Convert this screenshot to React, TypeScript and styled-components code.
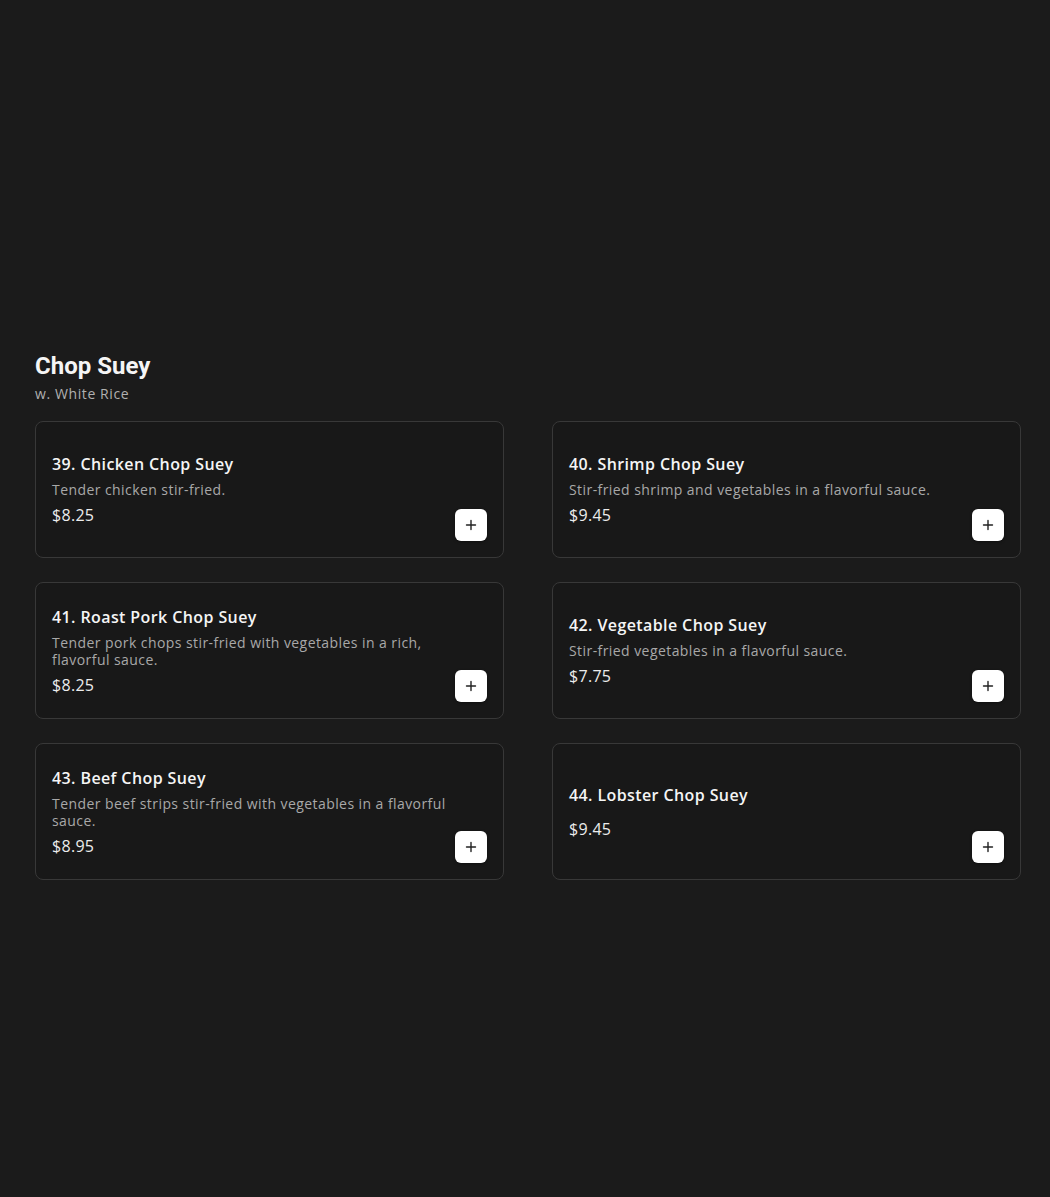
import { FC } from "react"
import styled, { createGlobalStyle } from "styled-components"

const GlobalStyle = createGlobalStyle`
  html, body {
    margin: 0;
    padding: 0;
    background: #1b1b1b;
  }
  body {
    font-family: "Open Sans", "Liberation Sans", sans-serif;
    color: #f2f2f2;
  }
`

const Page = styled.div`
  min-height: 1197px;
  padding: 352px 30px 0 35px;
  box-sizing: border-box;
`

const Heading = styled.h2`
  margin: 0;
  font-family: Roboto, "Liberation Sans", sans-serif;
  font-size: 24px;
  font-weight: 700;
  line-height: 28px;
  color: #f5f5f5;
`

const Subtitle = styled.p`
  margin: 4px 0 0;
  font-size: 14px;
  line-height: 20px;
  letter-spacing: 0.6px;
  color: #b0b0b0;
`

const Grid = styled.div`
  display: grid;
  grid-template-columns: 469px 469px;
  column-gap: 48px;
  row-gap: 24px;
  margin-top: 17px;
`

const Card = styled.div`
  display: flex;
  justify-content: space-between;
  height: 137px;
  box-sizing: border-box;
  padding: 16px;
  background: #181818;
  border: 1px solid #383838;
  border-radius: 8px;
`

const Info = styled.div`
  align-self: center;
  display: flex;
  flex-direction: column;
  max-width: 400px;
`

const Title = styled.div`
  font-size: 16px;
  font-weight: 600;
  line-height: 24px;
  letter-spacing: 0.4px;
  color: #f5f5f5;
`

const Desc = styled.div`
  margin: 5px 0;
  font-size: 14px;
  line-height: 17px;
  letter-spacing: 0.43px;
  color: #a8a8a8;
`

const Price = styled.div`
  font-size: 16px;
  line-height: 24px;
  letter-spacing: 0.3px;
  color: #ececec;
`

const AddButton = styled.button`
  align-self: flex-end;
  flex: none;
  width: 32px;
  height: 32px;
  padding: 0;
  display: flex;
  align-items: center;
  justify-content: center;
  background: #ffffff;
  border: none;
  border-radius: 6px;
  cursor: pointer;
  box-shadow: 0 1px 3px rgba(0, 0, 0, 0.4);
`

type Item = { name: string; desc?: string; price: string }

const items: Item[] = [
  { name: "39. Chicken Chop Suey", desc: "Tender chicken stir-fried.", price: "$8.25" },
  { name: "40. Shrimp Chop Suey", desc: "Stir-fried shrimp and vegetables in a flavorful sauce.", price: "$9.45" },
  {
    name: "41. Roast Pork Chop Suey",
    desc: "Tender pork chops stir-fried with vegetables in a rich, flavorful sauce.",
    price: "$8.25",
  },
  { name: "42. Vegetable Chop Suey", desc: "Stir-fried vegetables in a flavorful sauce.", price: "$7.75" },
  {
    name: "43. Beef Chop Suey",
    desc: "Tender beef strips stir-fried with vegetables in a flavorful sauce.",
    price: "$8.95",
  },
  { name: "44. Lobster Chop Suey", price: "$9.45" },
]

const PlusIcon: FC = () => (
  <svg width="12" height="12" viewBox="0 0 12 12" fill="none">
    <path d="M6 1.5v9M1.5 6h9" stroke="#222" strokeWidth="1.4" strokeLinecap="round" />
  </svg>
)

const App: FC = () => (
  <>
    <GlobalStyle />
    <Page>
      <Heading>Chop Suey</Heading>
      <Subtitle>w. White Rice</Subtitle>
      <Grid>
        {items.map((item) => (
          <Card key={item.name}>
            <Info>
              <Title>{item.name}</Title>
              <Desc>{item.desc}</Desc>
              <Price>{item.price}</Price>
            </Info>
            <AddButton aria-label="Add">
              <PlusIcon />
            </AddButton>
          </Card>
        ))}
      </Grid>
    </Page>
  </>
)

export default App
